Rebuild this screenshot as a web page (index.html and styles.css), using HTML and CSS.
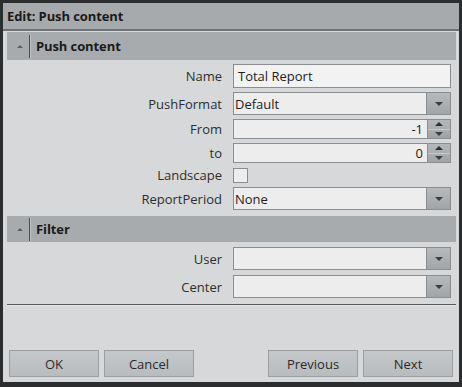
FILE: index.html
```html
<!DOCTYPE html>
<html>
<head>
<meta charset="utf-8">
<link rel="stylesheet" href="styles.css">
</head>
<body>
<div class="window">
  <div class="titlebar">Edit: Push content</div>
  <div class="content">
    <div class="section-header">
      <span class="toggle"><span class="tri-up"></span></span>
      <span class="sep"></span>
      <span class="section-title">Push content</span>
    </div>
    <div class="form form-main">
      <label class="lbl">Name</label>
      <div class="field text"><span class="val">Total Report</span></div>

      <label class="lbl">PushFormat</label>
      <div class="field combo"><span class="val">Default</span><span class="dd"><span class="tri-down"></span></span></div>

      <label class="lbl">From</label>
      <div class="field spin"><span class="num">-1</span><span class="spinbtn"><span class="half"><span class="tri-up dark"></span></span><span class="half"><span class="tri-down"></span></span></span></div>

      <label class="lbl">to</label>
      <div class="field spin"><span class="num">0</span><span class="spinbtn"><span class="half"><span class="tri-up dark"></span></span><span class="half"><span class="tri-down"></span></span></span></div>

      <label class="lbl">Landscape</label>
      <div class="checkrow"><span class="check"></span></div>

      <label class="lbl">ReportPeriod</label>
      <div class="field combo"><span class="val">None</span><span class="dd"><span class="tri-down"></span></span></div>
    </div>

    <div class="section-header filter">
      <span class="toggle"><span class="tri-up"></span></span>
      <span class="sep"></span>
      <span class="section-title">Filter</span>
    </div>
    <div class="form form-filter">
      <label class="lbl">User</label>
      <div class="field combo"><span class="val"></span><span class="dd"><span class="tri-down"></span></span></div>

      <label class="lbl">Center</label>
      <div class="field combo"><span class="val"></span><span class="dd"><span class="tri-down"></span></span></div>
    </div>

    <div class="divider"></div>

    <div class="buttons">
      <div class="btn-group">
        <button class="btn">OK</button>
        <button class="btn">Cancel</button>
      </div>
      <div class="btn-group">
        <button class="btn">Previous</button>
        <button class="btn">Next</button>
      </div>
    </div>
  </div>
</div>
</body>
</html>
```

FILE: styles.css
```css
html, body {
  margin: 0;
  padding: 0;
  background: #2c2d2e;
  width: 462px;
  height: 387px;
  overflow: hidden;
}

body {
  font-family: "Open Sans", "Noto Sans", sans-serif;
  font-size: 13px;
  color: #2a2a2a;
}

.window {
  margin: 3px 3px 0 3px;
  height: 379px;
  display: flex;
  flex-direction: column;
  background: #d6d8d9;
}

.titlebar {
  height: 26px;
  line-height: 26px;
  padding-left: 4px;
  background: #a6aaac;
  border-bottom: 2px solid #6e7173;
  font-weight: bold;
  color: #1b1b1b;
  letter-spacing: -0.1px;
}

.content {
  flex: 1;
  display: flex;
  flex-direction: column;
  padding: 0 3px 5px 4px;
}

.section-header {
  margin-top: 1px;
  height: 28px;
  background: #a7abad;
  display: flex;
  align-items: center;
}

.section-header.filter {
  margin-top: 6px;
  height: 26px;
}

.toggle {
  box-sizing: border-box;
  width: 22px;
  padding-left: 3px;
  display: flex;
  justify-content: center;
  align-items: center;
}

.tri-up {
  width: 0;
  height: 0;
  border-left: 3px solid transparent;
  border-right: 3px solid transparent;
  border-bottom: 3px solid #5b5e60;
}

.tri-up.dark {
  border-left-width: 4px;
  border-right-width: 4px;
  border-bottom: 4px solid #2e3032;
}

.tri-down {
  width: 0;
  height: 0;
  border-left: 4px solid transparent;
  border-right: 4px solid transparent;
  border-top: 4px solid #3a3c3e;
}

.sep {
  width: 1px;
  height: 23px;
  background: #4a4c4e;
  border-right: 1px solid #bfc2c4;
}

.section-title {
  margin-left: 5px;
  font-weight: bold;
  color: #1b1b1b;
  letter-spacing: -0.1px;
}

.form {
  display: grid;
  grid-template-columns: 215px 218px;
  column-gap: 11px;
  row-gap: 4px;
  align-items: center;
}

.form-main {
  margin-top: 4px;
  grid-template-rows: 24px 23px 20px 20px 16px 23px;
}

.form-filter {
  margin-top: 5px;
  grid-template-rows: 23px 23px;
  row-gap: 5px;
}

.lbl {
  text-align: right;
  color: #2e2e2e;
  white-space: nowrap;
}

.field {
  box-sizing: border-box;
  height: 100%;
  background: #ededed;
  border: 1px solid #8b8e90;
  display: flex;
  align-items: center;
  color: #1e1e1e;
}

.field.text {
  background: #f2f2f2;
  padding-left: 4px;
}

.field.combo .val {
  flex: 1;
  padding-left: 1px;
}

.dd {
  width: 24px;
  height: 100%;
  box-sizing: border-box;
  border-left: 1px solid #8b8e90;
  background: linear-gradient(#b6babc, #a1a5a7);
  display: flex;
  align-items: center;
  justify-content: center;
}

.field.spin .num {
  flex: 1;
  text-align: right;
  padding-right: 4px;
}

.spinbtn {
  width: 23px;
  height: 100%;
  box-sizing: border-box;
  border-left: 1px solid #8b8e90;
  background: linear-gradient(#b4b8ba, #a0a4a6);
  display: flex;
  flex-direction: column;
}

.half {
  flex: 1;
  display: flex;
  align-items: center;
  justify-content: center;
}

.half + .half {
  border-top: 1px solid #c8cbcd;
}

.checkrow {
  height: 100%;
  display: flex;
  align-items: center;
}

.check {
  box-sizing: border-box;
  width: 15px;
  height: 15px;
  background: #ededed;
  border: 1px solid #8b8e90;
}

.divider {
  margin-top: 6px;
  height: 1px;
  background: #55585a;
  border-bottom: 1px solid #e2e4e5;
}

.buttons {
  margin-top: auto;
  display: flex;
  justify-content: space-between;
  padding: 0 3px 0 2px;
}

.btn-group {
  display: flex;
  gap: 5px;
}

.btn {
  width: 90px;
  height: 27px;
  box-sizing: border-box;
  border: 1px solid #9c9fa1;
  background: linear-gradient(#c5c8ca, #b8bcbe);
  font-family: "Open Sans", "Noto Sans", sans-serif;
  font-size: 13px;
  color: #2a2a2a;
  padding: 0;
}
```
